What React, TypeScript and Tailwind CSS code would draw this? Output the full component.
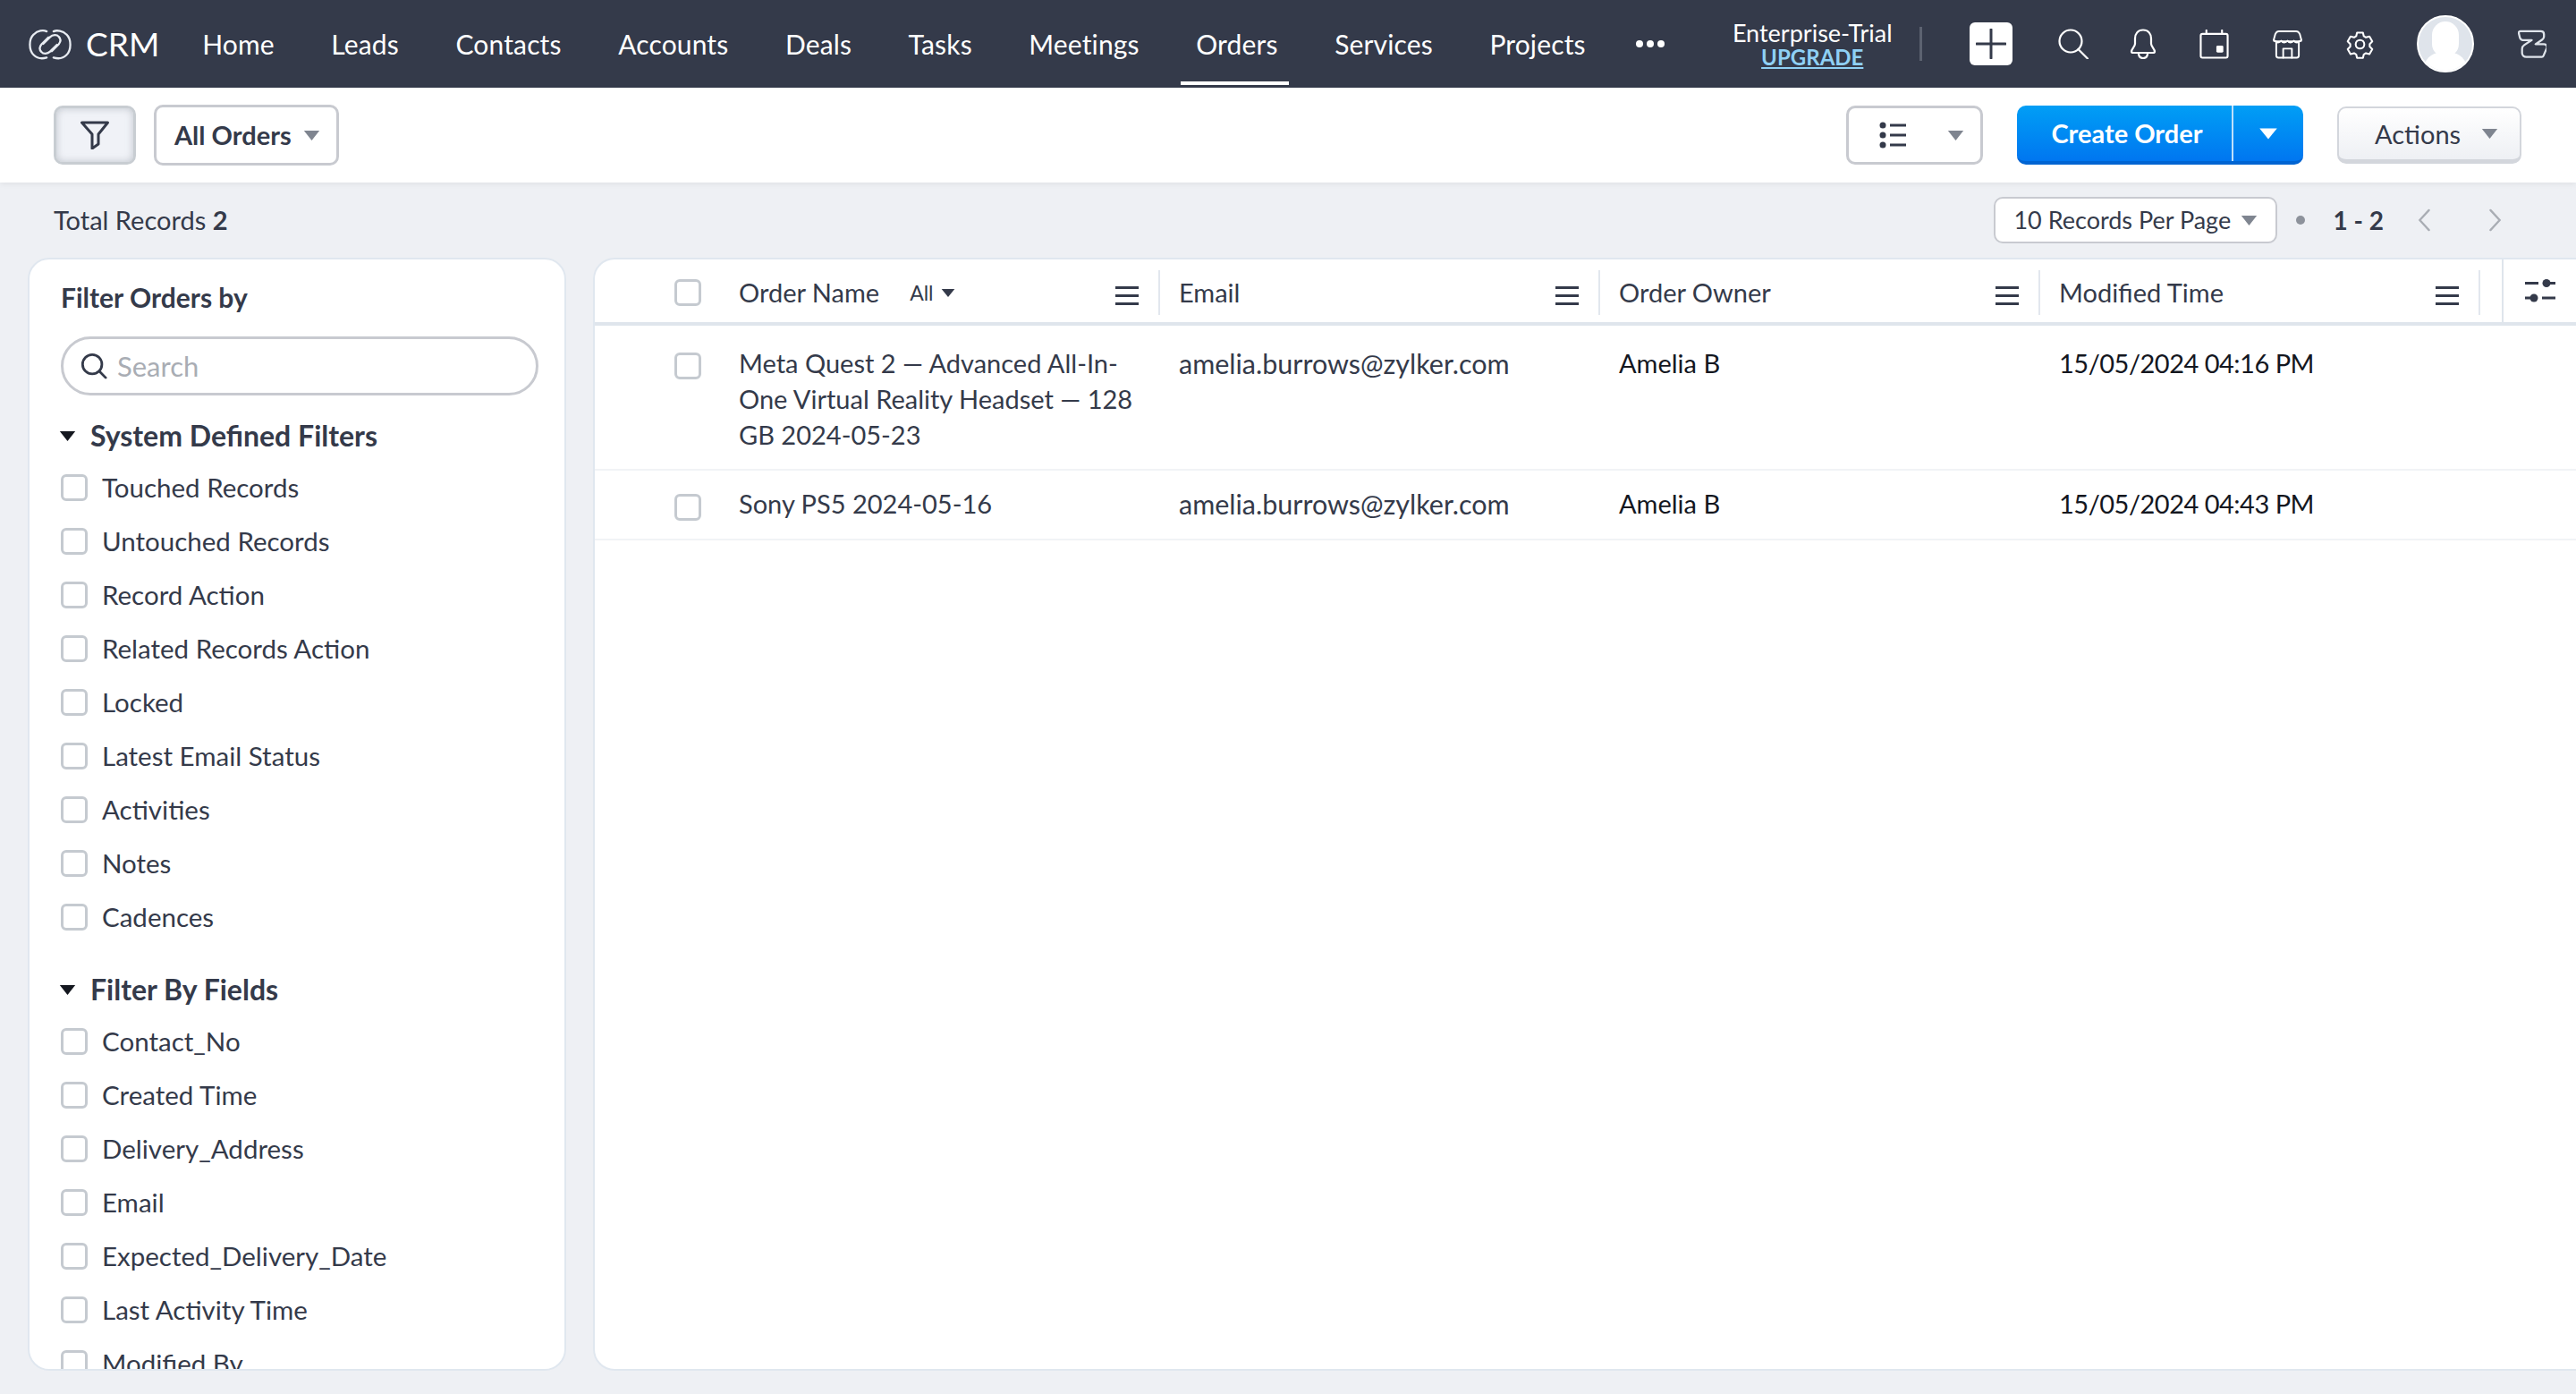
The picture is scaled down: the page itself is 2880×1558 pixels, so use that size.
import React from "react";

const navItems = ["Home", "Leads", "Contacts", "Accounts", "Deals", "Tasks", "Meetings", "Orders", "Services", "Projects"];
const systemFilters = ["Touched Records", "Untouched Records", "Record Action", "Related Records Action", "Locked", "Latest Email Status", "Activities", "Notes", "Cadences"];
const fieldFilters = ["Contact_No", "Created Time", "Delivery_Address", "Email", "Expected_Delivery_Date", "Last Activity Time", "Modified By"];
const rows = [
    {
        name: "Meta Quest 2 — Advanced All-In-One Virtual Reality Headset — 128 GB 2024-05-23",
        email: "amelia.burrows@zylker.com",
        owner: "Amelia B",
        time: "15/05/2024 04:16 PM",
    },
    {
        name: "Sony PS5 2024-05-16",
        email: "amelia.burrows@zylker.com",
        owner: "Amelia B",
        time: "15/05/2024 04:43 PM",
    },
];

const Caret: React.FC<{ className?: string }> = ({ className = "" }) => (
    <svg viewBox="0 0 18 12" className={className} fill="currentColor">
        <path d="M1 1h16L9 11z" />
    </svg>
);

const Checkbox: React.FC = () => (
    <span className="block w-[30px] h-[30px] shrink-0 rounded-[6px] border-[3px] border-[#c5cad0] bg-white" />
);

const MenuLines: React.FC = () => (
    <svg viewBox="0 0 26 22" className="w-[26px] h-[22px]" fill="#343a4a">
        <rect x="0" y="1" width="26" height="3" />
        <rect x="0" y="10" width="26" height="3" />
        <rect x="0" y="19" width="26" height="3" />
    </svg>
);

const Logo: React.FC = () => (
    <svg viewBox="0 0 50 36" className="w-[48px] h-[35px]" fill="none" stroke="#e8ecf2" strokeWidth="2.4" strokeLinecap="round">
        <path d="M21 33.5C16 35 10 34.5 6 30.5C0 25 0 12 6 6.5C10.5 2 17 1 21 3" />
        <path d="M29 33.5C34 35 40 34.5 44 30.5C50 25 50 12 44 6.5C40 2.5 33 1 29 3" />
        <path d="M17 17.5L25 9.5C28 6.5 33 6.500 35 9C37.500 11.500 37.500 15 35 18L27 26" />
        <path d="M33 18.500L25 26.500C22 29.500 17 29.500 15 27C12.500 24.500 12.500 21 15 18L23 10" />
    </svg>
);

const NavIcons: React.FC = () => (
    <div className="flex items-center">
        <div className="w-[48px] h-[48px] rounded-[6px] bg-white flex items-center justify-center ml-[53px]">
            <svg viewBox="0 0 34 34" className="w-[34px] h-[34px]" stroke="#343a4a" strokeWidth="3" strokeLinecap="round">
                <path d="M17 1v32M1 17h32" />
            </svg>
        </div>
        <svg viewBox="0 0 34 34" className="w-[34px] h-[34px] ml-[51px]" fill="none" stroke="#fff" strokeWidth="2.200">
            <circle cx="14" cy="14" r="12.500" />
            <path d="M22.500 23L33 33.500" strokeLinecap="round" />
        </svg>
        <svg viewBox="0 0 30 34" className="w-[30px] h-[34px] ml-[46px]" fill="none" stroke="#fff" strokeWidth="2.200" strokeLinejoin="round" strokeLinecap="round">
            <path d="M15 1.500C9 1.500 6 6 6 11v6c0 3-4 6-4 8.500c0 1 .8 1.500 2 1.500h22c1.200 0 2-.5 2-1.500C28 23 24 20 24 17v-6C24 6 21 1.500 15 1.500z" />
            <path d="M10 28.500c.5 3 2.500 4.500 5 4.500s4.500-1.500 5-4.500" />
        </svg>
        <svg viewBox="0 0 34 34" className="w-[33px] h-[33px] ml-[48px]" fill="none" stroke="#fff" strokeWidth="2.200" strokeLinecap="round">
            <rect x="1.500" y="5" width="31" height="27.500" rx="2" />
            <path d="M8 1v4M26 1v4" />
            <rect x="19.500" y="18.500" width="8" height="8" rx="1.500" fill="#fff" stroke="none" />
        </svg>
        <svg viewBox="0 0 34 34" className="w-[33px] h-[33px] ml-[49px]" fill="none" stroke="#fff" strokeWidth="2" strokeLinejoin="round" strokeLinecap="round">
            <path d="M7 2h20c2 0 3 1 4 3l2 7c0 1-.5 1.500-1.500 1.500H2.500C1.500 13.500 1 13 1 12l2-7c1-2 2-3 4-3z" />
            <path d="M2.500 13c2 2.500 5 2.500 7.200 0c2 2.500 5 2.500 7.300 0c2 2.500 5 2.500 7.300 0c2 2.500 5 2.500 7.200 0" />
            <path d="M4 14v16c0 1.500 1 2.500 2.500 2.500h21c1.500 0 2.500-1 2.500-2.500V14" />
            <path d="M12 32.500V22h10v10.500" />
        </svg>
        <svg viewBox="0 0 24 24" className="w-[33px] h-[33px] ml-[48px]" fill="none" stroke="#fff" strokeWidth="1.500" strokeLinejoin="round">
            <path d="M9.600 2.500h4.800l.7 2.900 1.700 1 2.900-.8 2.300 4-2.100 2.200v2l2.100 2.200-2.300 4-2.900-.8-1.700 1-.7 2.900H9.600l-.7-2.900-1.700-1-2.900.8-2.300-4 2.100-2.200v-2L2 9.600l2.300-4 2.900.8 1.700-1z" />
            <circle cx="12" cy="12" r="3.500" />
        </svg>
        <div className="relative w-[64px] h-[64px] rounded-full bg-[#dfe4eb] overflow-hidden ml-[47px] border-2 border-white">
            <span className="absolute left-[15px] top-[5px] w-[30px] h-[40px] rounded-[15px] bg-white" />
            <span className="absolute left-[6px] top-[40px] w-[48px] h-[30px] rounded-t-[18px] bg-white" />
        </div>
        <svg viewBox="0 0 34 34" className="w-[32px] h-[32px] ml-[49px]" fill="none" stroke="#dfe4eb" strokeWidth="2.400" strokeLinejoin="round">
            <path d="M3 2h24c3 0 4 1.500 4 3.500v3c0 1.500-.8 2.500-2 3.500l-8 5.500h10c2 0 3.500 1 3.500 3v1c0 1-.5 1.500-1 2.500l-3 7c-.5 1-1 1.500-2 1.500H10c-3 0-5-2-5-4.500v-5c0-2 1-3.500 2.500-4.500l9-6H6c-2 0-3-1-3.500-2.500L1 4c0-1.500 1-2 2-2z" />
        </svg>
    </div>
);

const Section: React.FC<{ title: string; items: string[] }> = ({ title, items }) => (
    <div>
        <div className="flex items-center h-[40px]">
            <Caret className="w-[21px] h-[13px] text-[#14171f] ml-[-3px] mr-[15px]" />
            <span className="text-[32px] font-bold text-[#343a4a] leading-[40px] whitespace-nowrap">{title}</span>
        </div>
        <div className="mt-[8px]">
            {items.map((item) => (
                <div key={item} className="flex items-center h-[60px]">
                    <Checkbox />
                    <span className="ml-[16px] text-[29.5px] text-[#343a4a] whitespace-nowrap">{item}</span>
                </div>
            ))}
        </div>
    </div>
);

const HeaderCell: React.FC<{ title: string; extra?: boolean }> = ({ title, extra }) => (
    <div className="w-[492px] shrink-0 flex items-center pl-[21px] pr-[22px] h-[50px] border-r-2 border-[#e2e7ee]">
        <span className="text-[29px] text-[#343a4a] whitespace-nowrap">{title}</span>
        {extra && (
            <span className="flex items-center ml-[34px] text-[23px] text-[#343a4a]">
                All
                <Caret className="w-[18px] h-[11px] ml-[7px]" />
            </span>
        )}
        <span className="ml-auto mt-[6px]">
            <MenuLines />
        </span>
    </div>
);

export default function App() {
    return (
        <div className="w-[2880px] h-[1558px] overflow-hidden flex flex-col bg-[#eef0f4] text-[#343a4a] font-['Lato',sans-serif]">
            <header className="h-[98px] shrink-0 bg-[#343a4a] flex items-center text-white pl-[32px]">
                <Logo />
                <span className="ml-[16px] text-[37px] mr-[31px]">CRM</span>
                <nav className="flex items-center h-full">
                    {navItems.map((item) => (
                        <a
                            key={item}
                            className={
                                item === "Orders"
                                    ? "relative flex items-center h-full px-[17px] mr-[29.5px] text-[30px] tracking-[0.15px] whitespace-nowrap"
                                    : "flex items-center h-full px-[17px] mr-[29.5px] text-[30px] tracking-[0.15px] whitespace-nowrap"
                            }
                        >
                            {item}
                            {item === "Orders" && <span className="absolute left-0 right-[5px] bottom-[3px] h-[4px] bg-white" />}
                        </a>
                    ))}
                </nav>
                <div className="flex gap-[4px] ml-[10px]">
                    <span className="w-[8px] h-[8px] rounded-full bg-white" />
                    <span className="w-[8px] h-[8px] rounded-full bg-white" />
                    <span className="w-[8px] h-[8px] rounded-full bg-white" />
                </div>
                <div className="w-[184px] ml-[73px] flex flex-col items-center leading-none">
                    <span className="text-[27px] leading-[29px] whitespace-nowrap">Enterprise-Trial</span>
                    <span className="text-[24px] leading-[26px] font-bold text-[#8fd0f5] underline">UPGRADE</span>
                </div>
                <span className="w-[3px] h-[38px] bg-[#5c6270] ml-[28px]" />
                <NavIcons />
            </header>

            <div className="h-[106px] shrink-0 bg-white flex items-center pl-[60px] pr-[61px] shadow-[0_2px_6px_rgba(0,0,0,0.06)]">
                <button className="w-[92px] h-[66px] rounded-[10px] bg-[#f0f2f7] border-[3px] border-[#c8cdd2] shadow-[inset_0_0_8px_rgba(120,130,140,0.4)] flex items-center justify-center">
                    <svg viewBox="0 0 32 32" className="w-[32px] h-[32px]" fill="none" stroke="#343a4a" strokeWidth="3" strokeLinejoin="round">
                        <path d="M1.500 2h29L20 15v11l-7 5V15z" />
                    </svg>
                </button>
                <button className="ml-[20px] w-[207px] h-[68px] rounded-[10px] border-[3px] border-[#c8cad0] bg-white flex items-center pl-[20px]">
                    <span className="text-[29px] font-bold text-[#343a4a]">All Orders</span>
                    <Caret className="w-[21px] h-[13px] ml-[12px] text-[#7f8590]" />
                </button>
                <button className="ml-auto w-[153px] h-[66px] rounded-[10px] border-[3px] border-[#c8cad0] bg-white flex items-center pl-[34px]">
                    <svg viewBox="0 0 32 30" className="w-[32px] h-[32px]" fill="#343a4a">
                        <circle cx="4" cy="4" r="3.500" />
                        <circle cx="4" cy="15" r="3.500" />
                        <circle cx="4" cy="26" r="3.500" />
                        <rect x="12" y="2.500" width="18" height="3" />
                        <rect x="12" y="13.500" width="18" height="3" />
                        <rect x="12" y="24.500" width="18" height="3" />
                    </svg>
                    <Caret className="w-[21px] h-[13px] ml-[43px] text-[#7f8590]" />
                </button>
                <div className="ml-[38px] w-[320px] h-[66px] rounded-[10px] bg-gradient-to-b from-[#039ef5] to-[#0076f0] border-b-[4px] border-[#0064d2] flex items-stretch text-white">
                    <span className="w-[242px] pl-[6px] flex items-center justify-center text-[29px] font-bold border-r-2 border-[#bfe0fb]">Create Order</span>
                    <span className="flex-1 flex items-center justify-center">
                        <Caret className="w-[22px] h-[15px]" />
                    </span>
                </div>
                <button className="ml-[38px] w-[206px] h-[64px] rounded-[10px] bg-gradient-to-b from-white to-[#eef0f4] border-[2px] border-b-[5px] border-[#d3d6dc] flex items-center pl-[40px]">
                    <span className="text-[29px] text-[#343a4a]">Actions</span>
                    <Caret className="w-[21px] h-[13px] ml-[22px] text-[#7f8590]" />
                </button>
            </div>

            <div className="h-[84px] shrink-0 flex items-center pl-[60px] pr-[82px]">
                <span className="text-[29px] text-[#343a4a]">
                    Total Records <b className="font-bold">2</b>
                </span>
                <button className="ml-auto w-[317px] h-[52px] rounded-[10px] border-[2px] border-[#c8cad0] bg-white flex items-center pl-[20px]">
                    <span className="text-[27px] text-[#343a4a] whitespace-nowrap">10 Records Per Page</span>
                    <Caret className="w-[21px] h-[13px] ml-[10px] text-[#7f8590]" />
                </button>
                <span className="ml-[21px] w-[10px] h-[10px] rounded-full bg-[#8d929b]" />
                <span className="ml-[31px] text-[28px] font-bold text-[#343a4a] whitespace-nowrap">1 - 2</span>
                <svg viewBox="0 0 16 28" className="w-[16px] h-[26px] ml-[37px]" fill="none" stroke="#a9adb4" strokeWidth="2.500" strokeLinecap="round">
                    <path d="M14 2L3 14l11 12" />
                </svg>
                <svg viewBox="0 0 16 28" className="w-[16px] h-[26px] ml-[64px]" fill="none" stroke="#a9adb4" strokeWidth="2.500" strokeLinecap="round">
                    <path d="M2 2l11 12L2 26" />
                </svg>
            </div>

            <div className="flex-1 flex min-h-0 pl-[31px] pb-[26px] gap-[30px]">
                <aside className="w-[602px] shrink-0 rounded-[24px] bg-white border-2 border-[#e0e7ef] pl-[35px] pr-[29px] overflow-hidden">
                    <div className="mt-[22px] text-[30px] leading-[40px] font-bold text-[#343a4a]">Filter Orders by</div>
                    <div className="mt-[24px] h-[66px] rounded-full border-[3px] border-[#c8cad0] flex items-center pl-[19px]">
                        <svg viewBox="0 0 32 32" className="w-[30px] h-[30px]" fill="none" stroke="#343a4a" strokeWidth="3">
                            <circle cx="14" cy="14" r="11.500" />
                            <path d="M22.500 22.500L30 30" strokeLinecap="round" />
                        </svg>
                        <span className="ml-[11px] text-[31px] text-[#a9adb4]">Search</span>
                    </div>
                    <div className="mt-[25px]">
                        <Section title="System Defined Filters" items={systemFilters} />
                    </div>
                    <div className="mt-[31px]">
                        <Section title="Filter By Fields" items={fieldFilters} />
                    </div>
                </aside>

                <main className="flex-1 min-w-0 rounded-l-[24px] bg-white border-2 border-r-0 border-[#e0e7ef] overflow-hidden">
                    <div className="h-[74px] pt-[4px] flex items-center border-b-4 border-[#dfe5ec]">
                        <div className="w-[140px] shrink-0 pl-[89px]">
                            <Checkbox />
                        </div>
                        <HeaderCell title="Order Name" extra />
                        <HeaderCell title="Email" />
                        <HeaderCell title="Order Owner" />
                        <HeaderCell title="Modified Time" />
                        <div className="ml-[24px] mt-[-4px] h-[70px] border-l-2 border-[#dfe5ec] flex items-center pl-[24px]">
                            <svg viewBox="0 0 34 28" className="w-[34px] h-[28px]" fill="#343a4a">
                                <rect x="0" y="4" width="15" height="3" />
                                <circle cx="24" cy="5.500" r="4.500" />
                                <rect x="24" y="4" width="10" height="3" />
                                <circle cx="10" cy="22" r="4.500" />
                                <rect x="0" y="20.500" width="10" height="3" />
                                <rect x="19" y="20.500" width="15" height="3" />
                            </svg>
                        </div>
                    </div>
                    {rows.map((row, i) => (
                        <div key={row.time} className={i === 0 ? "flex border-b-2 border-[#f1f3f6] pt-[22px] pb-[18px]" : "flex border-b-2 border-[#f1f3f6] pt-[17px] pb-[19px]"}>
                            <div className={i === 0 ? "w-[140px] shrink-0 pl-[89px] pt-[8px]" : "w-[140px] shrink-0 pl-[89px] pt-[9px]"}>
                                <Checkbox />
                            </div>
                            <div className="w-[492px] shrink-0 pl-[21px] pr-[30px] text-[29px] leading-[40px] text-[#343a4a]">{row.name}</div>
                            <div className="w-[492px] shrink-0 pl-[21px] text-[30.5px] leading-[40px] text-[#343a4a]">{row.email}</div>
                            <div className="w-[492px] shrink-0 pl-[21px] text-[29px] leading-[40px] text-[#14171f]">{row.owner}</div>
                            <div className="w-[492px] shrink-0 pl-[21px] text-[29px] tracking-[-0.5px] leading-[40px] text-[#14171f]">{row.time}</div>
                        </div>
                    ))}
                </main>
            </div>
        </div>
    );
}
